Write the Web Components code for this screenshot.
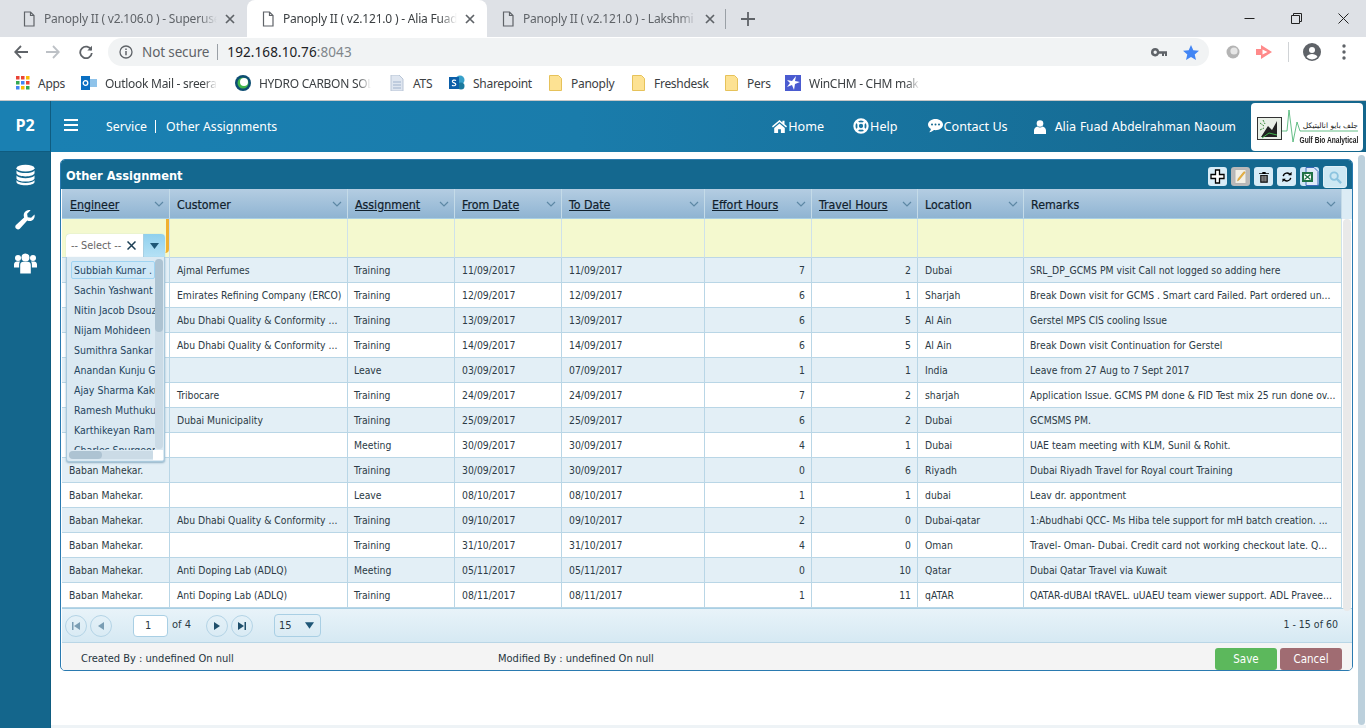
<!DOCTYPE html>
<html lang="en"><head><meta charset="utf-8"><title>Panoply II</title>
<style>
html,body{margin:0;height:728px;overflow:hidden;background:#fff;font-family:"DejaVu Sans Condensed","DejaVu Sans",sans-serif}
body{display:flex;flex-direction:column}
</style></head><body>
<browser-chrome></browser-chrome>
<app-shell></app-shell>
<script>
function def(name,css,html,init){
  customElements.define(name,class extends HTMLElement{
    constructor(){super();const r=this.attachShadow({mode:'open'});
      const h=typeof html==='function'?html(this):html;
      r.innerHTML='<style>'+css+'</style>'+h;if(init)init(r,this);}
  });
}
const I={
 doc:'<svg width="14" height="16" viewBox="0 0 14 16" fill="none" stroke="#5f6368" stroke-width="1.2"><path d="M2.5 1h6l3.5 3.5V15h-9.500zM8.500 1v3.500H12"/></svg>',
 x:'<svg width="10" height="10" viewBox="0 0 10 10" stroke="#5f6368" stroke-width="1.700"><path d="M1 1l8 8M9 1l-8 8"/></svg>',
 folder:'<svg width="13" height="16" viewBox="0 0 13 16"><path d="M.5.5h9l3 3v12H.5z" fill="#fde293" stroke="#e6c25a"/></svg>',
 home:'<svg width="15" height="13" viewBox="0 0 15 13" fill="#fff"><path d="M7.500 0L0 6.300l.9 1.100L7.500 2l6.600 5.400.9-1.100-2.500-2.100V.8h-2.100v1.600zM2.200 7.900V13h3.900V9.200h2.800V13h3.900V7.900L7.500 3.500z"/></svg>',
 help:'<svg width="16" height="16" viewBox="0 0 16 16" fill="none" stroke="#fff"><circle cx="8" cy="8" r="6.600" stroke-width="2.200"/><circle cx="8" cy="8" r="2.900" stroke-width="1.500"/><path d="M3 3l3 3M13 3l-3 3M3 13l3-3M13 13l-3-3" stroke-width="2.600"/></svg>',
 chat:'<svg width="15" height="14" viewBox="0 0 15 14"><path fill="#fff" d="M7.500 0C3.400 0 0 2.500 0 5.600c0 1.800 1.100 3.400 2.900 4.400-.2 1.200-.9 2.500-1.700 3.300 1.800-.2 3.500-1 4.800-2.200.5.100 1 .1 1.500.1 4.100 0 7.500-2.500 7.500-5.600S11.600 0 7.500 0z"/><g fill="#14688f"><circle cx="4" cy="5.600" r="1"/><circle cx="7.500" cy="5.600" r="1"/><circle cx="11" cy="5.600" r="1"/></g></svg>',
 user:'<svg width="12" height="14" viewBox="0 0 12 14" fill="#fff"><circle cx="6" cy="3.500" r="3.300"/><path d="M0 14v-3.500C0 8.200 1.800 6.800 3.500 6.500 4.200 7.200 5 7.600 6 7.600s1.800-.4 2.500-1.100C10.200 6.800 12 8.200 12 10.500V14z"/></svg>',
 db:'<svg width="19" height="22" viewBox="0 0 20 22" fill="#fff"><ellipse cx="10" cy="3.800" rx="9.500" ry="3.600"/><path d="M.5 6.200C2 8.300 6 9 10 9s8-.7 9.500-2.800V9c0 2-4.300 3.600-9.500 3.600S.5 11 .5 9zM.5 11.500c1.500 2.100 5.500 2.800 9.500 2.800s8-.7 9.500-2.800v2.800c0 2-4.300 3.600-9.500 3.600S.5 16.300.5 14.300zM.5 16.500c1.500 2.100 5.500 2.800 9.500 2.800s8-.7 9.500-2.800v1.800c0 2-4.300 3.500-9.500 3.500S.5 20.300.5 18.300z"/></svg>',
 wrench:'<svg width="20" height="20" viewBox="0 0 20 20" fill="#fff"><path d="M19.500 4.500c.6 2.500-.3 4.800-2.500 6-1.500.8-3.200.8-4.700.1L4.800 18.800c-1 1-2.400 1-3.400 0l-.4-.4c-1-1-1-2.400 0-3.400l8.100-7.600c-.6-1.600-.5-3.300.4-4.800C10.800.5 13.200-.4 15.600.3l-3.500 3.400.6 3.500 3.400.6z"/></svg>',
 users:'<svg width="23" height="21" viewBox="0 0 23 20" fill="#fff"><circle cx="4" cy="4.500" r="3"/><circle cx="19" cy="4.500" r="3"/><circle cx="11.500" cy="4" r="4"/><path d="M0 14V11c0-2 1.500-3 3-3h3c-.7 1-.9 2-.9 3.200V14zM23 14V11c0-2-1.500-3-3-3h-3c.7 1 .9 2 .9 3.200V14zM6.200 20v-8.500c0-2 1.500-3.200 3-3.200h4.600c1.500 0 3 1.200 3 3.200V20z"/></svg>',
 chev:'<svg width="10" height="6" viewBox="0 0 10 6" fill="none" stroke="#5d88a5" stroke-width="1.200"><path d="M1 1l4 4 4-4"/></svg>'
};

def('browser-tab',`:host{display:flex;align-items:center;width:240px;height:37px;box-sizing:border-box;padding:0 12px 0 14px;gap:8px;color:#5f6368;position:relative;flex:none}
:host([active]){background:#fff;border-radius:8px 8px 0 0;color:#3c4043}
span{flex:1;white-space:nowrap;overflow:hidden;font:12px "Noto Sans",sans-serif;letter-spacing:-.2px;-webkit-mask-image:linear-gradient(90deg,#000 90%,transparent)}
svg{flex:none}`,
 h=>I.doc+'<span>'+h.getAttribute('label')+'</span>'+I.x);

def('book-mark',`:host{display:flex;align-items:center;gap:8px;height:22px;flex:none;color:#3c4043}
span{display:block;white-space:nowrap;font:12px "Noto Sans",sans-serif;letter-spacing:-.28px}
:host([fade]) span{overflow:hidden;-webkit-mask-image:linear-gradient(90deg,#000 88%,transparent)}
.i{width:16px;height:16px;flex:none;display:flex;align-items:center;justify-content:center}`,
 h=>'<div class="i"><slot></slot></div><span style="width:'+h.getAttribute('w')+'px">'+h.getAttribute('label')+'</span>');

def('browser-chrome',`:host{display:block;flex:none;height:100px;background:#fff;border-bottom:1px solid #c8c8c8;box-sizing:content-box}
.tabs{height:37px;background:#dee1e6;display:flex;align-items:center;padding-left:8px;box-sizing:border-box}
.tabs browser-tab:first-child{width:239px}
.sep{width:1px;height:20px;background:#9aa0a6;margin-left:-2px}
.plus{margin-left:15px;width:14px;height:14px}
.win{margin-left:auto;display:flex;align-items:center;gap:36px;padding-right:17px}
.bar{height:29px;display:flex;align-items:center;padding:1px 0 0 14px;box-sizing:border-box}
.nav{display:flex;gap:18px;align-items:center;width:94px;flex:none}
.nav svg:last-child{margin-left:1px}
.omni{width:1101px;height:28px;background:#f1f3f4;border-radius:14px;display:flex;align-items:center;padding:0 10px 0 11px;box-sizing:border-box;font:13.500px "Noto Sans",sans-serif;color:#5f6368;flex:none}
.omni .ns{margin:0 8px 0 9px;letter-spacing:-.13px}
.omni i{width:1px;height:16px;background:#9aa0a6;margin-right:9px}
.omni b{font-weight:400;color:#202124;letter-spacing:.1px}
.omni u{text-decoration:none;color:#80868b}
.r{margin-left:auto;display:flex;align-items:center}
.ext{display:flex;align-items:center;flex:none;margin-left:17px}
.marks{height:34px;display:flex;align-items:center;padding-left:15px}`,
`<div class="tabs">
<browser-tab label="Panoply II ( v2.106.0 ) - Superuser"></browser-tab>
<browser-tab active label="Panoply II ( v2.121.0 ) - Alia Fuad"></browser-tab>
<browser-tab label="Panoply II ( v2.121.0 ) - Lakshmi G"></browser-tab>
<div class="sep"></div>
<svg class="plus" viewBox="0 0 14 14" stroke="#5f6368" stroke-width="1.800"><path d="M7 0v14M0 7h14"/></svg>
<div class="win">
<svg width="11" height="11" viewBox="0 0 11 11" stroke="#222" fill="none"><path d="M.5 5.500h10"/></svg>
<svg width="11" height="11" viewBox="0 0 11 11" stroke="#222" fill="none"><path d="M.5 2.500h8v8h-8zM2.500 2.500v-2h8v8h-2"/></svg>
<svg width="11" height="11" viewBox="0 0 11 11" stroke="#222" fill="none"><path d="M.5.5l10 10M10.500.5l-10 10"/></svg>
</div></div>
<div class="bar">
<div class="nav">
<svg width="14" height="14" viewBox="0 0 14 14" fill="none" stroke="#5f6368" stroke-width="1.800"><path d="M14 7H1.500M7 1L1.200 7 7 13"/></svg>
<svg width="14" height="14" viewBox="0 0 14 14" fill="none" stroke="#bdc1c6" stroke-width="1.800"><path d="M0 7h12.500M7 1l5.800 6L7 13"/></svg>
<svg width="14" height="14" viewBox="0 0 14 14" fill="none" stroke="#5f6368" stroke-width="1.800"><path d="M12.300 5A5.800 5.800 0 1 0 12.800 8"/><path d="M13 .8V5.500H8.300" fill="#5f6368" stroke="none"/></svg>
</div>
<div class="omni">
<svg width="14" height="14" viewBox="0 0 14 14" fill="none" stroke="#5f6368" stroke-width="1.300"><circle cx="7" cy="7" r="6"/><path d="M7 6v4.200M7 3.500v1.400" stroke-width="1.500"/></svg>
<span class="ns">Not secure</span><i></i><b>192.168.10.76<u>:8043</u></b>
<div class="r">
<svg width="16" height="9" viewBox="0 0 16 9" fill="#5f6368"><path d="M4.200 0a4.200 4.200 0 1 0 3.900 5.800H11V8h2V5.800h1V8h2V3.200H8.100A4.200 4.200 0 0 0 4.200 0zm0 2.600a1.700 1.700 0 1 1 0 3.400 1.700 1.700 0 0 1 0-3.400z"/></svg>
<svg style="margin-left:16px" width="16" height="15" viewBox="0 0 16 15" fill="#4285f4"><path d="M8 0l2.300 5.300 5.700.5-4.300 3.700 1.300 5.500L8 12.100 3 15l1.300-5.500L0 5.800l5.700-.5z"/></svg>
</div></div>
<div class="ext">
<svg width="14" height="14" viewBox="0 0 14 14"><circle cx="7" cy="7" r="6.500" fill="#b4b4b4"/><circle cx="8" cy="6" r="3.600" fill="#e6e6e6"/></svg>
<svg width="16" height="14" viewBox="0 0 16 14" style="margin-left:16px"><path d="M0 4h5V0l11 7-11 7v-4H0z" fill="#ff8a8a"/><path d="M6.500 4.500l5 2.500-5 2.500z" fill="#fff"/></svg>
<div style="width:1px;height:20px;background:#d0d3d6;margin-left:16px"></div>
<svg width="18" height="18" viewBox="0 0 18 18" style="margin-left:14px"><circle cx="9" cy="9" r="9" fill="#5f6368"/><circle cx="9" cy="7" r="3" fill="#fff"/><path d="M3.500 14c1-2.300 3.300-3 5.500-3s4.500.7 5.500 3a7.500 7.500 0 0 1-11 0z" fill="#fff"/></svg>
<svg width="4" height="16" viewBox="0 0 4 16" fill="#5f6368" style="margin-left:21px"><circle cx="2" cy="2" r="1.700"/><circle cx="2" cy="8" r="1.700"/><circle cx="2" cy="14" r="1.700"/></svg>
</div></div>
<div class="marks">
<book-mark label="Apps" w="27" style="margin-right:16px;gap:7px"><svg width="14" height="14" viewBox="0 0 14 14"><g fill="#ea4335"><rect width="3.500" height="3.500"/><rect x="5" width="3.500" height="3.500"/></g><rect x="10" width="3.500" height="3.500" fill="#fbbc05"/><g fill="#34a853"><rect y="5" width="3.500" height="3.500"/></g><rect x="5" y="5" width="3.500" height="3.500" fill="#4285f4"/><rect x="10" y="5" width="3.500" height="3.500" fill="#ea4335"/><rect y="10" width="3.500" height="3.500" fill="#4285f4"/><rect x="5" y="10" width="3.500" height="3.500" fill="#fbbc05"/><rect x="10" y="10" width="3.500" height="3.500" fill="#34a853"/></svg></book-mark>
<book-mark fade label="Outlook Mail - sreera" w="112" style="margin-right:18px"><svg width="16" height="16" viewBox="0 0 16 16"><rect y="1" width="9" height="14" fill="#0a6fc2"/><rect x="9" y="4" width="7" height="8" fill="#8fc3ea"/><circle cx="4.500" cy="8" r="2.300" fill="none" stroke="#fff" stroke-width="1.300"/></svg></book-mark>
<book-mark fade label="HYDRO CARBON SOL" w="112" style="margin-right:18px"><svg width="16" height="16" viewBox="0 0 16 16"><circle cx="8" cy="8" r="8" fill="#0d4d73"/><circle cx="8" cy="8" r="5.500" fill="#3fb54a"/><circle cx="9" cy="7" r="4" fill="#fff"/></svg></book-mark>
<book-mark label="ATS" w="20" style="margin-right:16px"><svg width="16" height="16" viewBox="0 0 16 16"><path d="M2 0h8l4 4v12H2z" fill="#dfe6f0" stroke="#b9c5d6"/><path d="M4 7h8M4 10h8M4 13h8" stroke="#9fb2cc"/></svg></book-mark>
<book-mark label="Sharepoint" w="58" style="margin-right:16px"><svg width="16" height="16" viewBox="0 0 16 16"><circle cx="11" cy="5" r="4.500" fill="#37a0c9"/><circle cx="12" cy="11" r="3.500" fill="#1b7a9e"/><rect y="2" width="10" height="12" fill="#0b5ea8"/><path d="M7 5.500C6 4.800 3 5 3.500 6.700 4 8 7 8 6.800 9.600 6.500 11 4 11 3 10.300" fill="none" stroke="#fff" stroke-width="1.200"/></svg></book-mark>
<book-mark label="Panoply" w="42" style="margin-right:17px">${I.folder}</book-mark>
<book-mark label="Freshdesk" w="52" style="margin-right:17px">${I.folder}</book-mark>
<book-mark label="Pers" w="22" style="margin-right:16px">${I.folder}</book-mark>
<book-mark fade label="WinCHM - CHM mak" w="111"><svg width="16" height="16" viewBox="0 0 16 16"><rect width="16" height="16" fill="#4a5bd0"/><path d="M2 5l5 1 4-5-1 5 5 1-5 2-1 6-2-5-5 2 3-4z" fill="#fff"/></svg></book-mark>
</div>`);

def('side-bar',`:host{display:flex;flex-direction:column;align-items:center;width:51px;flex:none;background:#14668c;box-sizing:border-box;border-right:1px solid #0f5c80}
.logo{width:50px;height:51px;background:#1a80b2;border-bottom:1px solid #0f5c80;color:#fff;font:bold 16px "Open Sans","DejaVu Sans",sans-serif;display:flex;align-items:center;justify-content:center;padding-bottom:3px;box-sizing:border-box;flex:none}
.m{height:45px;display:flex;align-items:center;justify-content:center;flex:none}`,
`<div class="logo">P2</div><div class="m">${I.db}</div><div class="m">${I.wrench}</div><div class="m" style="margin-top:-1px">${I.users}</div>`);

def('top-bar',`:host{display:flex;align-items:center;height:51px;flex:none;background:linear-gradient(90deg,#1a80b2 0%,#1a7cab 40%,#14668c 100%);color:#fff;font-size:13px;padding-left:13px;padding-right:3px;box-sizing:border-box}
.b{width:14px;height:12px;border-top:2.500px solid #fff;border-bottom:2.500px solid #fff;position:relative;margin-right:28px;box-sizing:border-box;margin-top:-3px}
.b::after{content:"";position:absolute;left:0;right:0;top:2.500px;height:2px;background:#fff}
.crumb{font-family:"Noto Sans",sans-serif;font-size:12.300px;display:flex;align-items:center}
.crumb i{display:block;width:1px;height:13px;background:#fff;margin:0 10px 0 8px}
nav{margin-left:auto;display:flex;align-items:center}
a{display:flex;align-items:center;gap:1px;color:#fff;font:12.600px "Noto Sans",sans-serif;margin-top:-1px}
.u{display:flex;align-items:center;gap:9px;margin-right:15px;margin-left:26px;font-size:13px}
.logo{width:112px;height:48px;background:#fff;border-radius:4px;color:#222;position:relative;flex:none;box-sizing:border-box;display:flex;padding:14px 5px 0 6px}
.pic{width:25px;height:23px;border:1px solid #333;background:#e9efe6;box-sizing:border-box;flex:none;overflow:hidden}
.t{flex:1;display:flex;flex-direction:column;align-items:flex-end;position:relative}
.ar{font:7.500px "DejaVu Sans",sans-serif;direction:rtl;color:#222;margin-top:4px;white-space:nowrap}
.en{font:bold 8.500px "Liberation Sans",sans-serif;color:#222;white-space:nowrap;margin-top:5px;width:max-content;transform:scaleX(.78);transform-origin:right center}
.hb{position:absolute;left:0;top:-11px}`,
`<div class="b"></div>
<div class="crumb"><span>Service</span><i></i><span>Other Assignments</span></div>
<nav><a style="margin-right:29px">${I.home}<span>Home</span></a><a style="margin-right:30px">${I.help}<span>Help</span></a><a>${I.chat}<span>Contact Us</span></a>
<div class="u">${I.user}<span>Alia Fuad Abdelrahman Naoum</span></div>
<div class="logo"><div class="pic"><svg width="23" height="21" viewBox="0 0 23 21"><path d="M3 19L10 8l4 4 5-9v16z" fill="#222"/><path d="M2 5l4 3M5 2l2 4M2 12l4-2" stroke="#3a8a3a" stroke-dasharray="2 1"/><path d="M4 20l7-5 8 2" stroke="#3fb54a" fill="none"/></svg></div>
<div class="t"><svg class="hb" width="76" height="36" viewBox="0 0 76 36" fill="none" stroke="#3fae6a" stroke-width=".8"><path d="M0 25h5l2-21 4 32 4-20 3 9h58"/></svg>
<div class="ar">جلف بايو اناليتيكل</div><div class="en">Gulf Bio Analytical</div></div></div></nav>`);

const rows=[
["","Ajmal Perfumes","Training","11/09/2017","11/09/2017",7,2,"Dubai","SRL_DP_GCMS PM visit Call not logged so adding here"],
["","Emirates Refining Company (ERCO)","Training","12/09/2017","12/09/2017",6,1,"Sharjah","Break Down visit for GCMS . Smart card Failed. Part ordered un..."],
["","Abu Dhabi Quality & Conformity ...","Training","13/09/2017","13/09/2017",6,5,"Al Ain","Gerstel MPS CIS cooling Issue"],
["","Abu Dhabi Quality & Conformity ...","Training","14/09/2017","14/09/2017",6,5,"Al Ain","Break Down visit Continuation for Gerstel"],
["","","Leave","03/09/2017","07/09/2017",1,1,"India","Leave from 27 Aug to 7 Sept 2017"],
["","Tribocare","Training","24/09/2017","24/09/2017",7,2,"sharjah","Application Issue. GCMS PM done & FID Test mix 25 run done ov..."],
["","Dubai Municipality","Training","25/09/2017","25/09/2017",6,2,"Dubai","GCMSMS PM."],
["","","Meeting","30/09/2017","30/09/2017",4,1,"Dubai","UAE team meeting with KLM, Sunil & Rohit."],
["Baban Mahekar.","","Training","30/09/2017","30/09/2017",0,6,"Riyadh","Dubai Riyadh Travel for Royal court Training"],
["Baban Mahekar.","","Leave","08/10/2017","08/10/2017",1,1,"dubai","Leav dr. appontment"],
["Baban Mahekar.","Abu Dhabi Quality & Conformity ...","Training","09/10/2017","09/10/2017",2,0,"Dubai-qatar","1:Abudhabi QCC- Ms Hiba tele support for mH batch creation. ..."],
["Baban Mahekar.","","Training","31/10/2017","31/10/2017",4,0,"Oman","Travel- Oman- Dubai. Credit card not working checkout late. Q..."],
["Baban Mahekar.","Anti Doping Lab (ADLQ)","Meeting","05/11/2017","05/11/2017",0,10,"Qatar","Dubai Qatar Travel via Kuwait"],
["Baban Mahekar.","Anti Doping Lab (ADLQ)","Training","08/11/2017","08/11/2017",1,11,"qATAR","QATAR-dUBAI tRAVEL. uUAEU team viewer support. ADL Pravee..."]
];
const H=[["Engineer",1],["Customer",0],["Assignment",1],["From Date",1],["To Date",1],["Effort Hours",1],["Travel Hours",1],["Location",0],["Remarks",0]];
const esc=s=>String(s).replace(/&/g,'&amp;');
const names=["Subbiah Kumar .","Sachin Yashwant","Nitin Jacob Dsouz","Nijam Mohideen","Sumithra Sankar","Anandan Kunju G","Ajay Sharma Kaku","Ramesh Muthukur","Karthikeyan Rama","Charles Spurgeon"];

def('select-popup',`:host{position:absolute;left:4px;top:15px;width:99px;z-index:5;display:block;font-size:10.500px}
.inp{height:23px;display:flex;border-radius:4px 4px 0 0;overflow:hidden;background:#fff;box-shadow:0 0 1px #9cc}
.inp span{flex:1;padding-left:5px;color:#666;font-size:10.800px;line-height:22px;display:flex;align-items:center;justify-content:space-between;padding-right:7px}
.inp em{width:21px;flex:none;background:linear-gradient(#8fd0ee,#b5e1f5);display:flex;align-items:center;justify-content:center;border-left:1px solid #a7cfe3}
.list{height:205px;position:relative;background:#dbe9f2;border:1px solid #a9c9dc;border-top:0;box-sizing:border-box;border-radius:0 0 3px 3px;box-shadow:0 1px 2px #8fb0c4;overflow:hidden}
.items{position:absolute;left:4px;top:4px;width:84px;height:189px;overflow:hidden}
.it{height:20px;line-height:20px;padding-left:3px;white-space:nowrap;color:#1f4560;box-sizing:border-box;overflow:hidden}
.it.on{height:18px;margin-bottom:1px;line-height:16px;background:#cfe8f7;border:1px solid #9fd4f2;border-radius:2px;padding-left:2px;}
.vt{position:absolute;left:88px;top:2px;width:8px;height:190px;background:#cbdbe6;border-radius:4px}
.vt i{display:block;height:73px;background:#adc3d2;border-radius:4px}
.ht{position:absolute;left:2px;bottom:2px;width:86px;height:8px;background:#cbdbe6;border-radius:4px}
.ht i{display:block;width:33px;height:8px;background:#adc3d2;border-radius:4px}
.cn{position:absolute;right:1px;bottom:1px;width:10px;height:10px;background:#fff}`,
`<div class="inp"><span>-- Select --<svg width="9" height="9" viewBox="0 0 9 9" stroke="#1c3f55" stroke-width="1.500"><path d="M.5.500l8 8M8.500.500l-8 8"/></svg></span><em><svg width="9" height="6" viewBox="0 0 9 6" fill="#1f5777"><path d="M0 0h9L4.500 6z"/></svg></em></div>
<div class="list"><div class="items">${names.map((n,i)=>'<div class="it'+(i?'':' on')+'">'+n+'</div>').join('')}</div><div class="vt"><i></i></div><div class="ht"><i></i></div><div class="cn"></div></div>`);

def('grid-table',`:host{display:block;position:relative;font-size:10.300px;color:#2b3a45}
.g{display:grid;grid-template-columns:108px 178px 107px 107px 143px 107px 106px 106px 318px 10px;grid-auto-rows:max-content;width:1290px}
.h{height:30px;background:linear-gradient(#b4cde2,#8fb4d2);border-bottom:1px solid #a9cfe4;box-sizing:border-box;display:flex;align-items:center;justify-content:space-between;padding:0 5px 0 7px;border-right:1px solid #c4dbe8;color:#10202c;font-size:12.300px;-webkit-text-stroke:.2px #10202c}
.h span{margin-top:2px}
.h.first{padding-left:8px}
.h.u span{text-decoration:underline}
.f{height:39px;background:#f4f9cf;border-right:1px solid #cfe2ea;border-bottom:1px solid #bcd7e6;box-sizing:border-box;position:relative}
.f.mark{border-right:3px solid #f0b030;border-radius:0 0 4px 0;margin-right:1px;height:34px;border-bottom:0}
.fb{grid-column:1;grid-row:2;background:#f4f9cf;border-bottom:1px solid #bcd7e6;border-right:1px solid #cfe2ea;box-sizing:border-box}
.c{height:25px;line-height:24px;padding:0 3px 0 7px;border-right:1px solid #b9d6e6;border-bottom:1px solid #b9d6e6;box-sizing:border-box;white-space:nowrap;overflow:hidden;background:#fff}
.z{background:#e3eff6}
.c.a{padding-left:6px}
.n{text-align:right;padding-right:6px}
.sb{background:#dcecf5;grid-column:10;height:30px}
.vs{grid-column:10;grid-row:2 / span 15;background:#fff;padding:0 1px;height:100%;position:relative}
.vs i{position:absolute;left:1px;right:1px;top:0;bottom:-3px;background:#e9e9e9;border-radius:5px}`,
()=>{let o='<div class="g">';
 H.forEach((h,i)=>o+=`<div class="h${h[1]?' u':''}${i?'':' first'}"><span>${h[0]}</span>${I.chev}</div>`);
 o+='<div class="sb"></div>';
 o+='<div class="fb"></div>';
 H.forEach((h,i)=>o+=`<div class="f${i?'':' mark'}" style="grid-row:2;grid-column:${i+1}">${i==0?'<select-popup></select-popup>':''}</div>`);
 o+='<div class="vs"><i></i></div>';
 rows.forEach((r,i)=>{r.forEach((v,j)=>o+=`<div class="c${i%2?'':' z'}${j==5||j==6?' n':''}${j==2||j==8?' a':''}" style="grid-row:${i+3};grid-column:${j+1}">${esc(v)}</div>`)});
 return o+'</div>';});

const circ=(d)=>`<div class="o"><svg width="10" height="10" viewBox="0 0 10 10" fill="${d[1]}">${d[0]}</svg></div>`;
def('pager-bar',`:host{display:flex;align-items:center;height:35px;background:linear-gradient(#e8f3f9,#d6e9f3);border-top:1px solid #a9cfe4;border-bottom:1px solid #b9d6e6;box-sizing:border-box;padding-left:3px;padding-right:14px;font-size:10.500px;color:#2b3a45}
.o{width:22px;height:22px;border:1px solid #b4d4e6;border-radius:50%;box-sizing:border-box;display:flex;align-items:center;justify-content:center;margin-right:3px;flex:none}
.inp{width:35px;height:22px;background:#fff;border:1px solid #a9cfe4;border-radius:4px;box-sizing:border-box;padding-left:11px;line-height:20px;margin:0 4px 0 18px;font-size:11px}
.of{margin-right:15px;margin-top:-3px;font-size:11px}
.sel{width:47px;height:23px;border:1px solid #a9cfe4;border-radius:4px;box-sizing:border-box;margin-left:18px;display:flex;align-items:center;justify-content:space-between;padding:0 6px 0 4px;font-size:11px}
.tot{margin-left:auto;margin-top:-3px}`,
`${circ(['<path d="M1 1h1.500v8H1zM9 1v8L3 5z"/>','#7a9db3'])}${circ(['<path d="M8 1v8L2 5z"/>','#7a9db3'])}
<div class="inp">1</div><div class="of">of 4</div>
${circ(['<path d="M2 1v8l6-4z"/>','#1f4f6b'])}${circ(['<path d="M1 1v8l6-4zM7.500 1H9v8H7.500z"/>','#1f4f6b'])}
<div class="sel"><span>15</span><svg width="9" height="7" viewBox="0 0 10 7" fill="#1f5777"><path d="M0 0h10L5 7z"/></svg></div>
<div class="tot">1 - 15 of 60</div>`);

def('form-foot',`:host{display:flex;align-items:center;height:27px;background:#f4f4f4;font-size:11px;color:#26343e;position:relative;padding:3px 0 0 19px;box-sizing:border-box}
.m{width:417px}
.btns{margin-left:auto;display:flex;gap:3px;margin-right:10px;align-self:flex-end}
button{all:unset;width:62px;height:22px;border-radius:3px;color:#fff;text-align:center;font-size:11.500px;line-height:22px}
.s{background:#5cb85c}.c{background:#a06c72}`,
`<div class="m">Created By : undefined On null</div><div>Modified By : undefined On null</div>
<div class="btns"><button class="s">Save</button><button class="c">Cancel</button></div>`);

const tb=(bg,inner,st='')=>`<div class="t" style="background:${bg};${st}">${inner}</div>`;
def('panel-box',`:host{display:block;width:1293px;height:512px;border:1px solid #2a7ab0;border-radius:5px;box-sizing:border-box;overflow:hidden;background:#fff}
.title{height:29px;background:#14688f;color:#fff;display:flex;align-items:center;padding-left:5px;font-weight:bold;font-size:12.700px}
.title>span{margin-top:2px}
.tools{margin-left:auto;display:flex;align-items:center;gap:4px;padding-right:5px;padding-top:4px}
.t{width:19px;height:19px;border-radius:3px;display:flex;align-items:center;justify-content:center;box-sizing:border-box}
.in{padding-left:1px}`,
`<div class="title"><span>Other Assignment</span><div class="tools">
${tb('#d8ecf7','<svg width="15" height="15" viewBox="0 0 15 15" fill="#fff" stroke="#000" stroke-width="1.300"><path d="M5.500 1h4v4.500H14v4H9.500V14h-4V9.500H1v-4h4.500z"/></svg>')}
${tb('#b9b9b9','<svg width="13" height="15" viewBox="0 0 13 15"><path d="M1 .5h11v14H1z" fill="#f2f0e6" stroke="#b5b5b5"/><path d="M3.500 12l.6-2.300L10 2.500l1.200 1-5.900 7.300z" fill="#efb43a" stroke="#b0802a" stroke-width=".4"/></svg>')}
${tb('#d8ecf7','<svg width="10" height="12" viewBox="0 0 12 14"><path d="M0 2.500h12v1H0zM4 1h4v1.500H4z" fill="#000"/><path d="M1.500 4.500h9V14h-9z" fill="#000"/><path d="M3.700 5.500v7M6 5.500v7M8.300 5.500v7" stroke="#fff"/></svg>')}
${tb('#d8ecf7','<svg width="10" height="12" viewBox="0 0 12 14" fill="none" stroke="#000" stroke-width="1.700"><path d="M1.500 6A4.500 4.500 0 0 1 9.800 4.500M10.500 8A4.500 4.500 0 0 1 2.200 9.500"/><path d="M7.500 4.800h4v-4zM4.500 9.200h-4v4z" fill="#000" stroke="none"/></svg>')}
${tb('#cfe4f5','<svg width="18" height="19" viewBox="0 0 18 19"><path d="M5 .5h8l4 4v14H5z" fill="#dfeaf8" stroke="#3c68b8"/><rect x="1" y="5" width="11" height="10" fill="#207245"/><rect x="3" y="7" width="7" height="6" fill="#fff"/><path d="M3.500 7.500l6 5M9.500 7.500l-6 5" stroke="#207245" stroke-width="1.300"/></svg>')}
${tb('#cde8f3','<svg width="13" height="13" viewBox="0 0 14 14" fill="none" stroke="#8cc4df" stroke-width="2"><circle cx="5.500" cy="5.500" r="4"/><path d="M8.500 8.500L13 13" stroke-width="2.500"/></svg>','width:24px;height:22px;margin-top:1px;border:1px solid #dff0f7')}
</div></div><div class="in"><slot></slot></div>`);

def('app-shell',`:host{display:flex;flex:1;min-height:0}
.main{flex:1;display:flex;flex-direction:column;min-width:0;position:relative}
.body{flex:1;display:flex;min-height:0;padding:7px 0 0 9px;box-sizing:border-box;border-bottom:3px solid #eef3f6;position:relative}
.pg{position:absolute;right:1px;top:3px;width:7px;bottom:0;background:#bcd0dc;border-radius:4px;}`,
`<side-bar></side-bar><div class="main"><top-bar></top-bar><div class="body">
<panel-box><grid-table></grid-table><pager-bar></pager-bar><form-foot></form-foot></panel-box>
<div class="pg"></div></div></div>`);
</script>
</body></html>
